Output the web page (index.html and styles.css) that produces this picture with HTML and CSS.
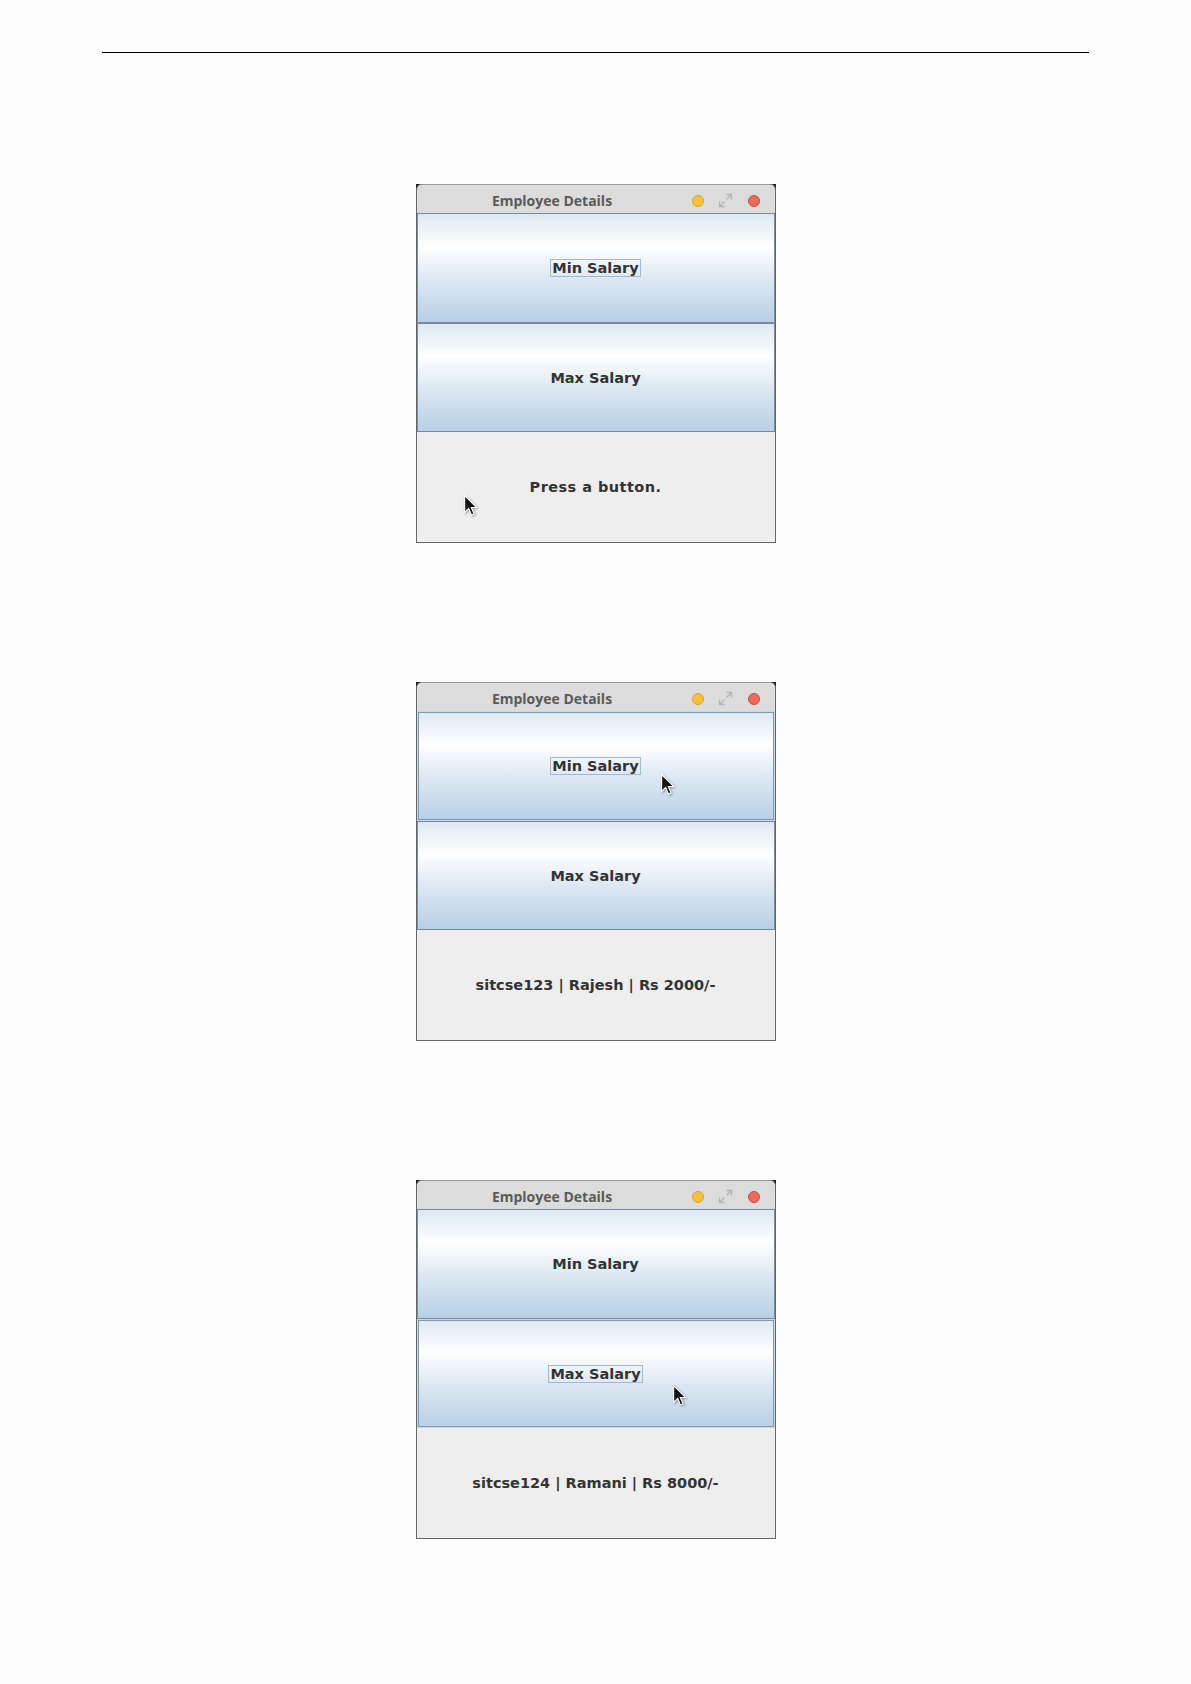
FILE: index.html
```html
<!DOCTYPE html>
<html lang="en">
<head>
  <meta charset="UTF-8" />
  <title>Employee Details</title>
  <link rel="stylesheet" href="styles.css">
</head>
<body>
  <div class="page">
    <hr class="rule">

    <div class="shots">
      <!-- 1: nothing pressed yet -->
      <div class="window">
        <div class="frame">
          <div class="titlebar">
            <span class="title">Employee Details</span>
            <div class="controls">
              <span class="dot dot-min"></span>
              <svg class="max-icon" viewBox="0 0 17 17" width="17" height="17">
                <path d="M2.5 9.5v5h5M2.5 14.5l5-5M9.5 2.5h5v5M14.5 2.5l-5 5" />
              </svg>
              <span class="dot dot-close"></span>
            </div>
          </div>
          <div class="btn btn-tall"><span class="focus">Min Salary</span></div>
          <div class="btn"><span>Max Salary</span></div>
          <div class="label label-wide">Press a button.</div>
        </div>
        <svg class="cursor cursor-a" viewBox="0 0 12 19" width="14" height="22">
          <path d="M0.5 0.5V15L4 11.6L6.4 17.2L8.6 16.3L6.3 10.8H11Z" />
        </svg>
      </div>

      <!-- 2: min salary -->
      <div class="window">
        <div class="frame">
          <div class="titlebar">
            <span class="title">Employee Details</span>
            <div class="controls">
              <span class="dot dot-min"></span>
              <svg class="max-icon" viewBox="0 0 17 17" width="17" height="17">
                <path d="M2.5 9.5v5h5M2.5 14.5l5-5M9.5 2.5h5v5M14.5 2.5l-5 5" />
              </svg>
              <span class="dot dot-close"></span>
            </div>
          </div>
          <div class="btn btn-tall rollover"><span class="focus">Min Salary</span></div>
          <div class="btn"><span>Max Salary</span></div>
          <div class="label">sitcse123 | Rajesh | Rs 2000/-</div>
        </div>
        <svg class="cursor cursor-b" viewBox="0 0 12 19" width="14" height="22">
          <path d="M0.5 0.5V15L4 11.6L6.4 17.2L8.6 16.3L6.3 10.8H11Z" />
        </svg>
      </div>

      <!-- 3: max salary -->
      <div class="window">
        <div class="frame">
          <div class="titlebar">
            <span class="title">Employee Details</span>
            <div class="controls">
              <span class="dot dot-min"></span>
              <svg class="max-icon" viewBox="0 0 17 17" width="17" height="17">
                <path d="M2.5 9.5v5h5M2.5 14.5l5-5M9.5 2.5h5v5M14.5 2.5l-5 5" />
              </svg>
              <span class="dot dot-close"></span>
            </div>
          </div>
          <div class="btn btn-tall"><span>Min Salary</span></div>
          <div class="btn rollover"><span class="focus">Max Salary</span></div>
          <div class="label">sitcse124 | Ramani | Rs 8000/-</div>
        </div>
        <svg class="cursor cursor-c" viewBox="0 0 12 19" width="14" height="22">
          <path d="M0.5 0.5V15L4 11.6L6.4 17.2L8.6 16.3L6.3 10.8H11Z" />
        </svg>
      </div>
    </div>
  </div>
</body>
</html>
```

FILE: styles.css
```css
* {
  box-sizing: border-box;
}

html, body {
  margin: 0;
  padding: 0;
  background: #fdfdfd;
}

.page {
  padding-top: 52px;
}

.rule {
  margin: 0 102px;
  height: 0;
  border: 0;
  border-top: 1px solid #000;
}

.shots {
  display: flex;
  flex-direction: column;
  align-items: center;
  gap: 139px;
  padding-top: 131px;
}

/* one screenshot of the swing window */
.window {
  position: relative;
  width: 360px;
  height: 359px;
  background: #1b261b;
}

.frame {
  display: flex;
  flex-direction: column;
  height: 100%;
  border: 1px solid #666;
  border-top-color: #9a9a9a;
  border-radius: 6px 6px 0 0;
  background: #eeeeee;
  overflow: hidden;
}

.titlebar {
  display: flex;
  align-items: center;
  height: 28px;
  flex: none;
  background: #dcdcdc;
}

.title {
  flex: 1;
  text-align: center;
  font-family: "Open Sans", "DejaVu Sans", sans-serif;
  font-weight: 700;
  font-size: 14px;
  color: #5a5a5a;
  padding-top: 3px;
}

.controls {
  display: flex;
  align-items: center;
  gap: 13px;
  margin-left: 4px;
  padding-right: 15px;
  padding-top: 3px;
}

.dot {
  width: 12px;
  height: 12px;
  border-radius: 50%;
}

.dot-min {
  background: #f7c13f;
  border: 1px solid #d9a12a;
}

.dot-close {
  background: #ec6a5c;
  border: 1px solid #c84c40;
  margin-left: 1px;
}

.max-icon {
  fill: none;
  stroke: #b3b3b3;
  stroke-width: 1.3;
}

.btn {
  display: flex;
  align-items: center;
  justify-content: center;
  height: 109px;
  flex: none;
  border: 1px solid #7a8a99;
  background: linear-gradient(to bottom, #dde8f3 0%, #ffffff 30%, #dde8f3 60%, #b8cfe5 100%);
  font-family: "DejaVu Sans", sans-serif;
  font-weight: bold;
  font-size: 14.5px;
  color: #333;
}

.btn-tall {
  height: 110px;
}

.btn.rollover {
  border-color: #c9d6e3;
  box-shadow: inset 0 0 0 1px #8199b1;
}

.btn span {
  line-height: 16px;
  padding: 0 1px;
  border: 1px solid transparent;
}

.btn .focus {
  border-color: #a3b8cc;
}

.label {
  flex: 1;
  display: flex;
  align-items: center;
  justify-content: center;
  font-family: "DejaVu Sans", sans-serif;
  font-weight: bold;
  font-size: 14.5px;
  color: #333;
}

.label-wide {
  letter-spacing: 0.45px;
}

/* mouse pointer left in the capture */
.cursor {
  position: absolute;
  fill: #111;
  stroke: #fff;
  stroke-width: 1;
  filter: drop-shadow(1px 1px 1px rgba(0, 0, 0, 0.35));
}

.cursor-a {
  left: 48px;
  top: 311px;
}

.cursor-b {
  left: 245px;
  top: 92px;
}

.cursor-c {
  left: 257px;
  top: 205px;
}
```
